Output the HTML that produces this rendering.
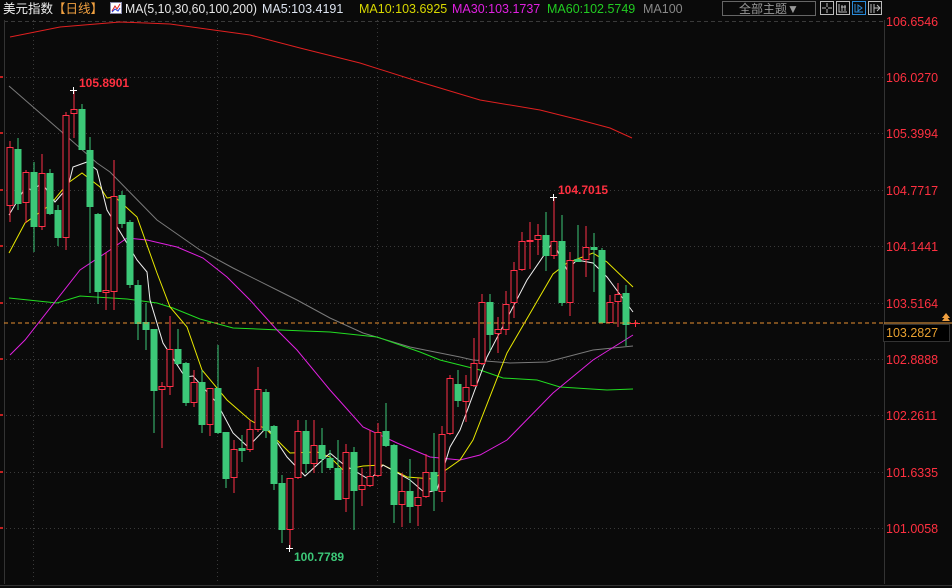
<!DOCTYPE html>
<html><head><meta charset="utf-8">
<style>
html,body{margin:0;padding:0;background:#0a0a0a;width:952px;height:588px;overflow:hidden}
svg{display:block}
text{font-family:"Liberation Sans","Noto Sans CJK SC",sans-serif}
</style></head>
<body>
<svg id="s" width="952" height="588" viewBox="0 0 952 588" xmlns="http://www.w3.org/2000/svg">
<rect width="952" height="588" fill="#0a0a0a"/>
<g stroke="#3a3a3a" stroke-width="1" stroke-dasharray="1,3">
<line x1="6" y1="77.5" x2="884" y2="77.5"/><line x1="6" y1="133.5" x2="884" y2="133.5"/>
<line x1="6" y1="190.5" x2="884" y2="190.5"/><line x1="6" y1="246.5" x2="884" y2="246.5"/>
<line x1="6" y1="303.5" x2="884" y2="303.5"/><line x1="6" y1="359.5" x2="884" y2="359.5"/>
<line x1="6" y1="415.5" x2="884" y2="415.5"/><line x1="6" y1="472.5" x2="884" y2="472.5"/>
<line x1="6" y1="528.5" x2="884" y2="528.5"/>
<line x1="33.5" y1="20" x2="33.5" y2="584"/><line x1="217.5" y1="20" x2="217.5" y2="584"/>
<line x1="377.5" y1="20" x2="377.5" y2="584"/>
</g>
<line x1="4" y1="21.5" x2="884" y2="21.5" stroke="#3a3a3a" stroke-dasharray="4,3"/>
<line x1="4.5" y1="20" x2="4.5" y2="584" stroke="#333"/>
<line x1="884.5" y1="20" x2="884.5" y2="584" stroke="#333"/>
<line x1="0" y1="585.5" x2="952" y2="585.5" stroke="#333"/>
<g fill="#c02020"><rect x="0" y="76" width="3" height="2"/><rect x="0" y="132" width="3" height="2"/><rect x="0" y="189" width="3" height="2"/><rect x="0" y="245" width="3" height="2"/><rect x="0" y="302" width="3" height="2"/><rect x="0" y="358" width="3" height="2"/><rect x="0" y="414" width="3" height="2"/><rect x="0" y="471" width="3" height="2"/><rect x="0" y="527" width="3" height="2"/></g>
<g id="ma" fill="none" stroke-width="1">
<polyline stroke="#e02020" points="10,37 60,27 120,22 170,24 250,35 300,48 360,63 420,82 480,100 540,110 580,120 610,128 632,138"/>
<polyline stroke="#7a7a7a" points="9,86 63,133 97,163 110,172 157,220 200,250 233,268 283,293 297,300 330,318 363,333 410,347 460,357 473,360 510,363 547,362 593,350 633,346"/>
<polyline stroke="#22dd22" points="9,298 57,303 80,296 127,299 157,303 173,308 200,319 233,328 280,330 330,332 377,337 420,352 440,360 480,370 503,378 537,380 560,387 607,390 633,389"/>
<polyline stroke="#e020e0" points="10,355 25,340 80,270 110,250 127,238 147,240 177,247 203,258 227,277 250,300 277,330 297,350 330,390 363,427 397,443 430,457 460,460 480,455 507,440 553,393 593,360 633,335"/>
<polyline stroke="#e8e800" points="9,253 25,223 50,205 68,183 82,173 100,187 107,198 115,197 137,217 157,273 170,307 187,327 202,370 227,400 250,420 267,430 290,453 317,452 330,457 343,470 363,466 383,465 407,477 433,479 460,460 473,440 507,353 553,274 567,263 593,253 607,262 633,287"/>
<polyline stroke="#f0f0f0" points="9,215 25,188 33,190 42,183 55,202 68,187 73,167 87,162 97,170 107,210 137,260 147,272 150,300 163,343 185,377 193,376 217,403 233,433 248,447 267,427 287,457 305,476 330,453 343,464 370,480 383,465 410,480 425,493 437,490 450,447 460,430 487,357 527,280 553,242 567,270 577,260 593,263 607,277 633,312"/>
</g>
<g id="cd"></g>
<line x1="4" y1="323" x2="884" y2="323" stroke="#e89030" stroke-width="1" stroke-dasharray="4,3"/>
<line x1="630" y1="323.5" x2="640" y2="323.5" stroke="#ff3040"/>
<line x1="635.5" y1="320" x2="635.5" y2="327" stroke="#ff3040"/>
<g stroke="#fff"><line x1="70" y1="90.5" x2="77" y2="90.5"/><line x1="73.5" y1="87" x2="73.5" y2="94"/>
<line x1="550" y1="197.5" x2="557" y2="197.5"/><line x1="553.5" y1="194" x2="553.5" y2="201"/>
<line x1="286" y1="548.5" x2="293" y2="548.5"/><line x1="289.5" y1="545" x2="289.5" y2="552"/></g>
<g font-size="12" font-weight="bold">
<text x="79" y="87" fill="#ff3040">105.8901</text>
<text x="558" y="194" fill="#ff3040">104.7015</text>
<text x="294" y="561" fill="#3cc878">100.7789</text>
</g>
<g font-size="12.5" fill="#ff3040">
<text x="886" y="26">106.6546</text><text x="886" y="82">106.0270</text>
<text x="886" y="138">105.3994</text><text x="886" y="195">104.7717</text>
<text x="886" y="251">104.1441</text><text x="886" y="308">103.5164</text>
<text x="886" y="364">102.8888</text><text x="886" y="420">102.2611</text>
<text x="886" y="477">101.6335</text><text x="886" y="533">101.0058</text>
</g>
<line x1="884" y1="323" x2="952" y2="323" stroke="#f0a040"/>
<rect x="883.5" y="324.5" width="66" height="17" fill="#000" stroke="#333"/>
<text x="886" y="337" font-size="12.5" fill="#e8a030">103.2827</text>
<path d="M942 321 L946 316 L950 321 Z M942 318 L946 313 L950 318 Z" fill="#f0a040"/>
<g font-size="12.5">
<text x="3" y="13" fill="#f0f0f0">美元指数</text>
<text x="53" y="13" fill="#f0a040">【日线】</text>
<rect x="110.5" y="2.5" width="11" height="11" fill="#fff" stroke="#88a"/>
<path d="M112 11 L115 6 L117 9 L120 4" stroke="#e02020" fill="none"/>
<path d="M112 12 L115 9 L118 11 L120 8" stroke="#2040e0" fill="none"/>
<text x="125" y="13" fill="#e8e8e8" textLength="132" lengthAdjust="spacingAndGlyphs">MA(5,10,30,60,100,200)</text>
<text x="262" y="13" fill="#dde4f0">MA5:103.4191</text>
<text x="359" y="13" fill="#d8d800">MA10:103.6925</text>
<text x="452" y="13" fill="#e020e0">MA30:103.1737</text>
<text x="547" y="13" fill="#22cc22">MA60:102.5749</text>
<text x="643" y="13" fill="#888">MA100</text>
</g>
<rect x="722.5" y="1.5" width="93" height="14" fill="none" stroke="#666"/>
<text x="739" y="13" font-size="12" fill="#999">全部主题▼</text>
<g fill="none" stroke="#bbb">
<rect x="820.5" y="1.5" width="13" height="13"/><rect x="836.5" y="1.5" width="13" height="13"/>
<rect x="852.5" y="1.5" width="13" height="13" stroke="#2a8ad8"/><rect x="868.5" y="1.5" width="13" height="13"/>
<path d="M827 3 V7 M827 9 V13 M822 8 H826 M828 8 H832"/>
<path d="M839 4 V12 H847 M842 5 V11 M845 5 V11 M841 7 H846"/>
<path d="M855 4 V12 H863 M858 5 L862 8 L858 11 Z" stroke="#2a8ad8"/>
<path d="M871 4 V13 M874 4 V13 M874 8 H880 M877 5 L880 8 L877 11"/>
</g>
</svg>
<script>
var d=[[147,205,141,222,1],[149,203,138,210,0],[172,202,170,223,1],[172,226,162,252,0],[173,226,154,230,1],[173,213,169,215,0],[210,237,205,246,0],[115,237,112,250,1],[109,113,90,138,1],[109,149,104,150,0],[150,206,137,293,0],[214,291,213,304,0],[290,292,253,310,1],[196,291,160,310,1],[195,223,191,228,0],[222,284,220,288,0],[285,323,280,340,0],[322,329,303,350,0],[329,390,329,433,0],[386,389,382,448,1],[349,386,316,395,1],[349,363,329,365,0],[363,402,362,406,0],[382,402,370,407,1],[382,424,370,433,0],[388,424,388,436,1],[388,432,345,434,0],[432,478,432,488,0],[449,477,440,493,1],[448,450,435,462,0],[429,449,420,452,1],[389,429,367,432,1],[392,430,389,438,0],[426,483,425,490,0],[483,529,475,543,0],[478,529,478,548,1],[431,477,420,479,1],[431,463,420,473,0],[445,463,420,473,1],[445,458,428,473,0],[458,467,450,470,0],[468,499,440,500,0],[452,498,444,512,1],[452,490,447,530,0],[485,489,468,506,1],[476,485,430,487,1],[432,475,423,477,1],[431,445,403,447,0],[445,504,444,523,0],[491,504,473,527,1],[491,506,459,523,0],[497,505,478,526,1],[472,496,454,498,1],[472,490,433,511,0],[434,491,426,502,1],[378,433,375,435,1],[384,400,370,407,0],[387,401,375,422,1],[363,385,338,387,1],[302,363,294,365,1],[302,334,294,351,0],[329,333,317,353,1],[304,329,291,335,1],[270,302,262,318,1],[241,269,232,271,1],[240,241,222,269,1],[235,239,224,255,1],[235,255,212,271,0],[241,255,197,259,1],[241,302,215,306,0],[260,302,252,316,1],[259,261,225,262,0],[247,259,226,277,1],[247,249,233,292,0],[250,322,248,323,0],[302,322,295,323,1],[294,301,283,327,1],[293,324,285,346,0]];
var g=document.getElementById('cd'),h='';
d.forEach(function(c,i){var x=9.5+8*i,r=c[4],col=r?'#ff3048':'#3cc878';
h+='<line x1="'+(x+.5)+'" y1="'+c[2]+'" x2="'+(x+.5)+'" y2="'+c[3]+'" stroke="'+col+'"/>';
var hh=Math.max(c[1]-c[0],1);
if(r)h+='<rect x="'+(x-2.5)+'" y="'+(c[0]+.5)+'" width="6" height="'+hh+'" fill="#0a0a0a" stroke="'+col+'"/>';
else h+='<rect x="'+(x-3)+'" y="'+c[0]+'" width="7" height="'+(hh+1)+'" fill="'+col+'"/>';});
g.innerHTML=h;
</script>
</body></html>
